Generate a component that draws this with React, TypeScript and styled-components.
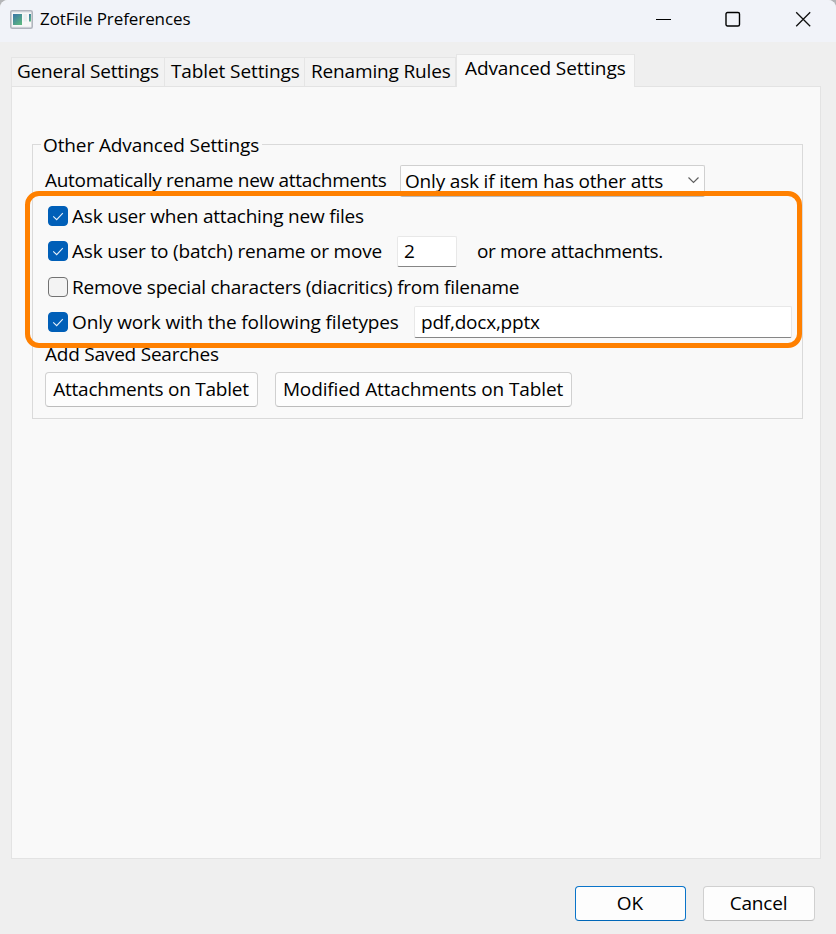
import React from 'react';
import styled, { createGlobalStyle } from 'styled-components';

const GlobalStyle = createGlobalStyle`
  *, *::before, *::after { box-sizing: border-box; }
  body { margin: 0; background: #b4b5b8; }
  button, input { font: inherit; color: inherit; }
`;

const Window = styled.div`
  display: flex;
  flex-direction: column;
  width: 836px;
  height: 934px;
  overflow: hidden;
  border-radius: 8px 8px 0 0;
  background: #efefef;
  color: #000;
  font: 19px/26px 'Open Sans', 'Noto Sans', sans-serif;
`;

const TitleBar = styled.header`
  display: flex;
  align-items: center;
  flex: none;
  height: 42px;
  padding: 0 24px 4px 10px;
  background: #f1f3f9;
`;

const Title = styled.h1`
  margin: 0 auto 0 7px;
  font-size: 17px;
  font-weight: 400;
  line-height: 24px;
  letter-spacing: -0.08px;
`;

const WindowControls = styled.div`
  display: flex;
  align-items: center;
  gap: 53px;
`;

const ControlButton = styled.button`
  display: flex;
  padding: 0;
  border: 0;
  background: none;

  &:last-child { margin-left: 1px; }
`;

const Text = styled.span<{ $track?: number }>`
  white-space: nowrap;
  letter-spacing: ${({ $track = 0 }) => $track}px;
`;

const TabList = styled.nav`
  display: flex;
  align-items: flex-end;
  flex: none;
  height: 44px;
  padding-left: 11px;
`;

const Tab = styled.button<{ $width: number; $active?: boolean }>`
  display: flex;
  align-items: flex-start;
  width: ${({ $width }) => $width}px;
  height: ${({ $active }) => ($active ? 33 : 29)}px;
  margin-bottom: ${({ $active }) => ($active ? -1 : 0)}px;
  padding: ${({ $active }) => ($active ? '0 0 0 8px' : '0 0 0 6px')};
  z-index: ${({ $active }) => ($active ? 1 : 0)};
  border: solid #e5e5e5;
  border-width: 1px 1px 0 ${({ $active }) => ($active ? 1 : 0)}px;
  background: ${({ $active }) => ($active ? '#f9f9f9' : '#f2f2f2')};

  &:first-child {
    padding-left: 5px;
    border-left-width: 1px;
  }
`;

const Panel = styled.main`
  position: relative;
  flex: none;
  width: 810px;
  height: 773px;
  margin-left: 11px;
  padding: 57px 0 0 20px;
  border: 1px solid #e3e3e3;
  background: #f9f9f9;
`;

const Group = styled.section`
  display: flex;
  flex-direction: column;
  width: 771px;
  height: 275px;
  padding: 0 10px 0 12px;
  border: 1px solid #dadada;
`;

const Legend = styled.h2`
  align-self: flex-start;
  flex: none;
  height: 26px;
  margin: -13px 0 4px -4px;
  padding: 0 3px 0 2px;
  background: #f9f9f9;
  font-size: 19px;
  font-weight: 400;
`;

const Row = styled.div<{ $height: number; $top?: number }>`
  display: flex;
  align-items: center;
  flex: none;
  height: ${({ $height }) => $height}px;
  margin-top: ${({ $top = 0 }) => $top}px;
`;

const Select = styled.button`
  display: flex;
  align-items: center;
  justify-content: space-between;
  width: 305px;
  height: 32px;
  margin: 2px 87px 0 auto;
  padding: 0 4px 1px 4px;
  border: 1px solid #d0d0d0;
  border-bottom-color: #b9b9b9;
  border-radius: 2px;
  background: #fdfdfd;
`;

const CheckLabel = styled.label`
  display: flex;
  align-items: center;
  gap: 4px;
  padding-left: 3px;
`;

const CheckBox = styled.span<{ $checked?: boolean }>`
  display: flex;
  align-items: center;
  justify-content: center;
  width: 20px;
  height: 20px;
  border: 1px solid ${({ $checked }) => ($checked ? '#005fb8' : '#727272')};
  border-radius: 4px;
  background: ${({ $checked }) => ($checked ? '#005fb8' : '#f3f3f3')};
`;

const Input = styled.input<{ $width: number; $height: number; $track?: number }>`
  width: ${({ $width }) => $width}px;
  height: ${({ $height }) => $height}px;
  padding: 0 0 1px 6px;
  border: 1px solid #e8e8e8;
  border-bottom-color: #868686;
  border-radius: 2px;
  outline: 0;
  background: #fff;
  letter-spacing: ${({ $track = 0 }) => $track}px;
`;

const CountInput = styled(Input)`
  margin: 1px 20px 0 auto;
`;

const BatchField = styled.div`
  display: flex;
  align-items: center;
  width: 618px;
  height: 34px;
  margin-bottom: 1px;
`;

const FileTypesInput = styled(Input)`
  margin-left: auto;
`;

const Button = styled.button<{ $width: number; $primary?: boolean }>`
  display: flex;
  align-items: center;
  justify-content: center;
  width: ${({ $width }) => $width}px;
  height: 35px;
  padding: 0 1px 2px 0;
  border: 1px solid ${({ $primary }) => ($primary ? '#0a74c9' : '#d0d0d0')};
  border-bottom-color: ${({ $primary }) => ($primary ? '#0067b8' : '#bcbcbc')};
  border-radius: 4px;
  background: #fdfdfd;
`;

const SearchButtons = styled.div`
  display: flex;
  gap: 17px;
  margin-top: 4px;
`;

const Highlight = styled.div`
  position: absolute;
  left: 13px;
  top: 104px;
  width: 777px;
  height: 157px;
  border: 5px solid #ff8000;
  border-radius: 14px;
  pointer-events: none;
`;

const Footer = styled.footer`
  display: flex;
  justify-content: flex-end;
  gap: 17px;
  padding: 27px 21px 0 0;
`;

const AppIcon = () => (
  <svg width="23" height="19" viewBox="0 0 23 19">
    <defs>
      <linearGradient id="pane" x1="0" y1="0" x2=".7" y2="1">
        <stop offset="0" stopColor="#3974a8" />
        <stop offset="1" stopColor="#5bb582" />
      </linearGradient>
    </defs>
    <rect x=".75" y=".75" width="21.5" height="17.5" rx="1.5" fill="#e9ebee" stroke="#b0b4bd" strokeWidth="1.5" />
    <rect x="2" y="3" width="19" height="13.5" fill="#f8f8f8" />
    <rect x="3" y="4" width="9" height="11" fill="url(#pane)" />
    <rect x="13.5" y="4" width="3.5" height="7.5" fill="#e9eef0" />
    <rect x="19" y="4" width="2" height="7.5" fill="url(#pane)" />
  </svg>
);

const CheckMark = () => (
  <svg width="12" height="10" viewBox="0 0 12 10" fill="none" stroke="#e5f0fa" strokeWidth="1.1">
    <path d="M1.2 5.3 4.7 8.7 10.8 2.2" />
  </svg>
);

type CheckProps = { label: string; checked?: boolean; track: number };

const Check = ({ label, checked, track }: CheckProps) => (
  <CheckLabel>
    <CheckBox $checked={checked} role="checkbox" aria-checked={!!checked}>
      {checked && <CheckMark />}
    </CheckBox>
    <Text $track={track}>{label}</Text>
  </CheckLabel>
);

export default function App() {
  return (
    <>
      <GlobalStyle />
      <Window>
        <TitleBar>
          <AppIcon />
          <Title>ZotFile Preferences</Title>
          <WindowControls>
            <ControlButton aria-label="Minimize">
              <svg width="16" height="16" viewBox="0 0 16 16"><path d="M0 8.5h15" stroke="#000" /></svg>
            </ControlButton>
            <ControlButton aria-label="Maximize">
              <svg width="16" height="16" viewBox="0 0 16 16" fill="none">
                <rect x="1" y="1.5" width="13.5" height="13.5" rx="1.5" stroke="#000" strokeWidth="1.4" />
              </svg>
            </ControlButton>
            <ControlButton aria-label="Close">
              <svg width="17" height="16" viewBox="0 0 17 16">
                <path d="m1.2 1.2 14 14m0-14-14 14" stroke="#111" strokeWidth="1.3" />
              </svg>
            </ControlButton>
          </WindowControls>
        </TitleBar>

        <TabList>
          <Tab $width={154}><Text $track={-0.22}>General Settings</Text></Tab>
          <Tab $width={140}><Text $track={-0.1}>Tablet Settings</Text></Tab>
          <Tab $width={151}><Text $track={-0.15}>Renaming Rules</Text></Tab>
          <Tab $width={179} $active><Text $track={-0.09}>Advanced Settings</Text></Tab>
        </TabList>

        <Panel>
          <Group>
            <Legend><Text $track={-0.11}>Other Advanced Settings</Text></Legend>
            <Row $height={36}>
              <Text $track={-0.3}>Automatically rename new attachments</Text>
              <Select>
                <Text $track={-0.18}>Only ask if item has other atts</Text>
                <svg width="13" height="9" viewBox="0 0 13 9" fill="none" stroke="#606060" strokeWidth="1.2">
                  <path d="m1.5 1.5 5 5 5-5" />
                </svg>
              </Select>
            </Row>
            <Row $height={36}>
              <Check checked label="Ask user when attaching new files" track={-0.2} />
            </Row>
            <Row $height={35}>
              <BatchField>
                <Check checked label="Ask user to (batch) rename or move" track={-0.18} />
                <CountInput $width={60} $height={31} defaultValue="2" />
                <Text $track={-0.33}>or more attachments.</Text>
              </BatchField>
            </Row>
            <Row $height={36}>
              <Check label="Remove special characters (diacritics) from filename" track={-0.24} />
            </Row>
            <Row $height={34}>
              <Check checked label="Only work with the following filetypes" track={-0.11} />
              <FileTypesInput $width={378} $height={32} $track={-0.22} defaultValue="pdf,docx,pptx" />
            </Row>
            <Row $height={28} $top={1}>
              <Text $track={-0.22}>Add Saved Searches</Text>
            </Row>
            <SearchButtons>
              <Button $width={213}><Text $track={-0.24}>Attachments on Tablet</Text></Button>
              <Button $width={297}><Text $track={-0.12}>Modified Attachments on Tablet</Text></Button>
            </SearchButtons>
          </Group>
          <Highlight />
        </Panel>

        <Footer>
          <Button $width={111} $primary><Text>OK</Text></Button>
          <Button $width={112}><Text $track={-0.2}>Cancel</Text></Button>
        </Footer>
      </Window>
    </>
  );
}
